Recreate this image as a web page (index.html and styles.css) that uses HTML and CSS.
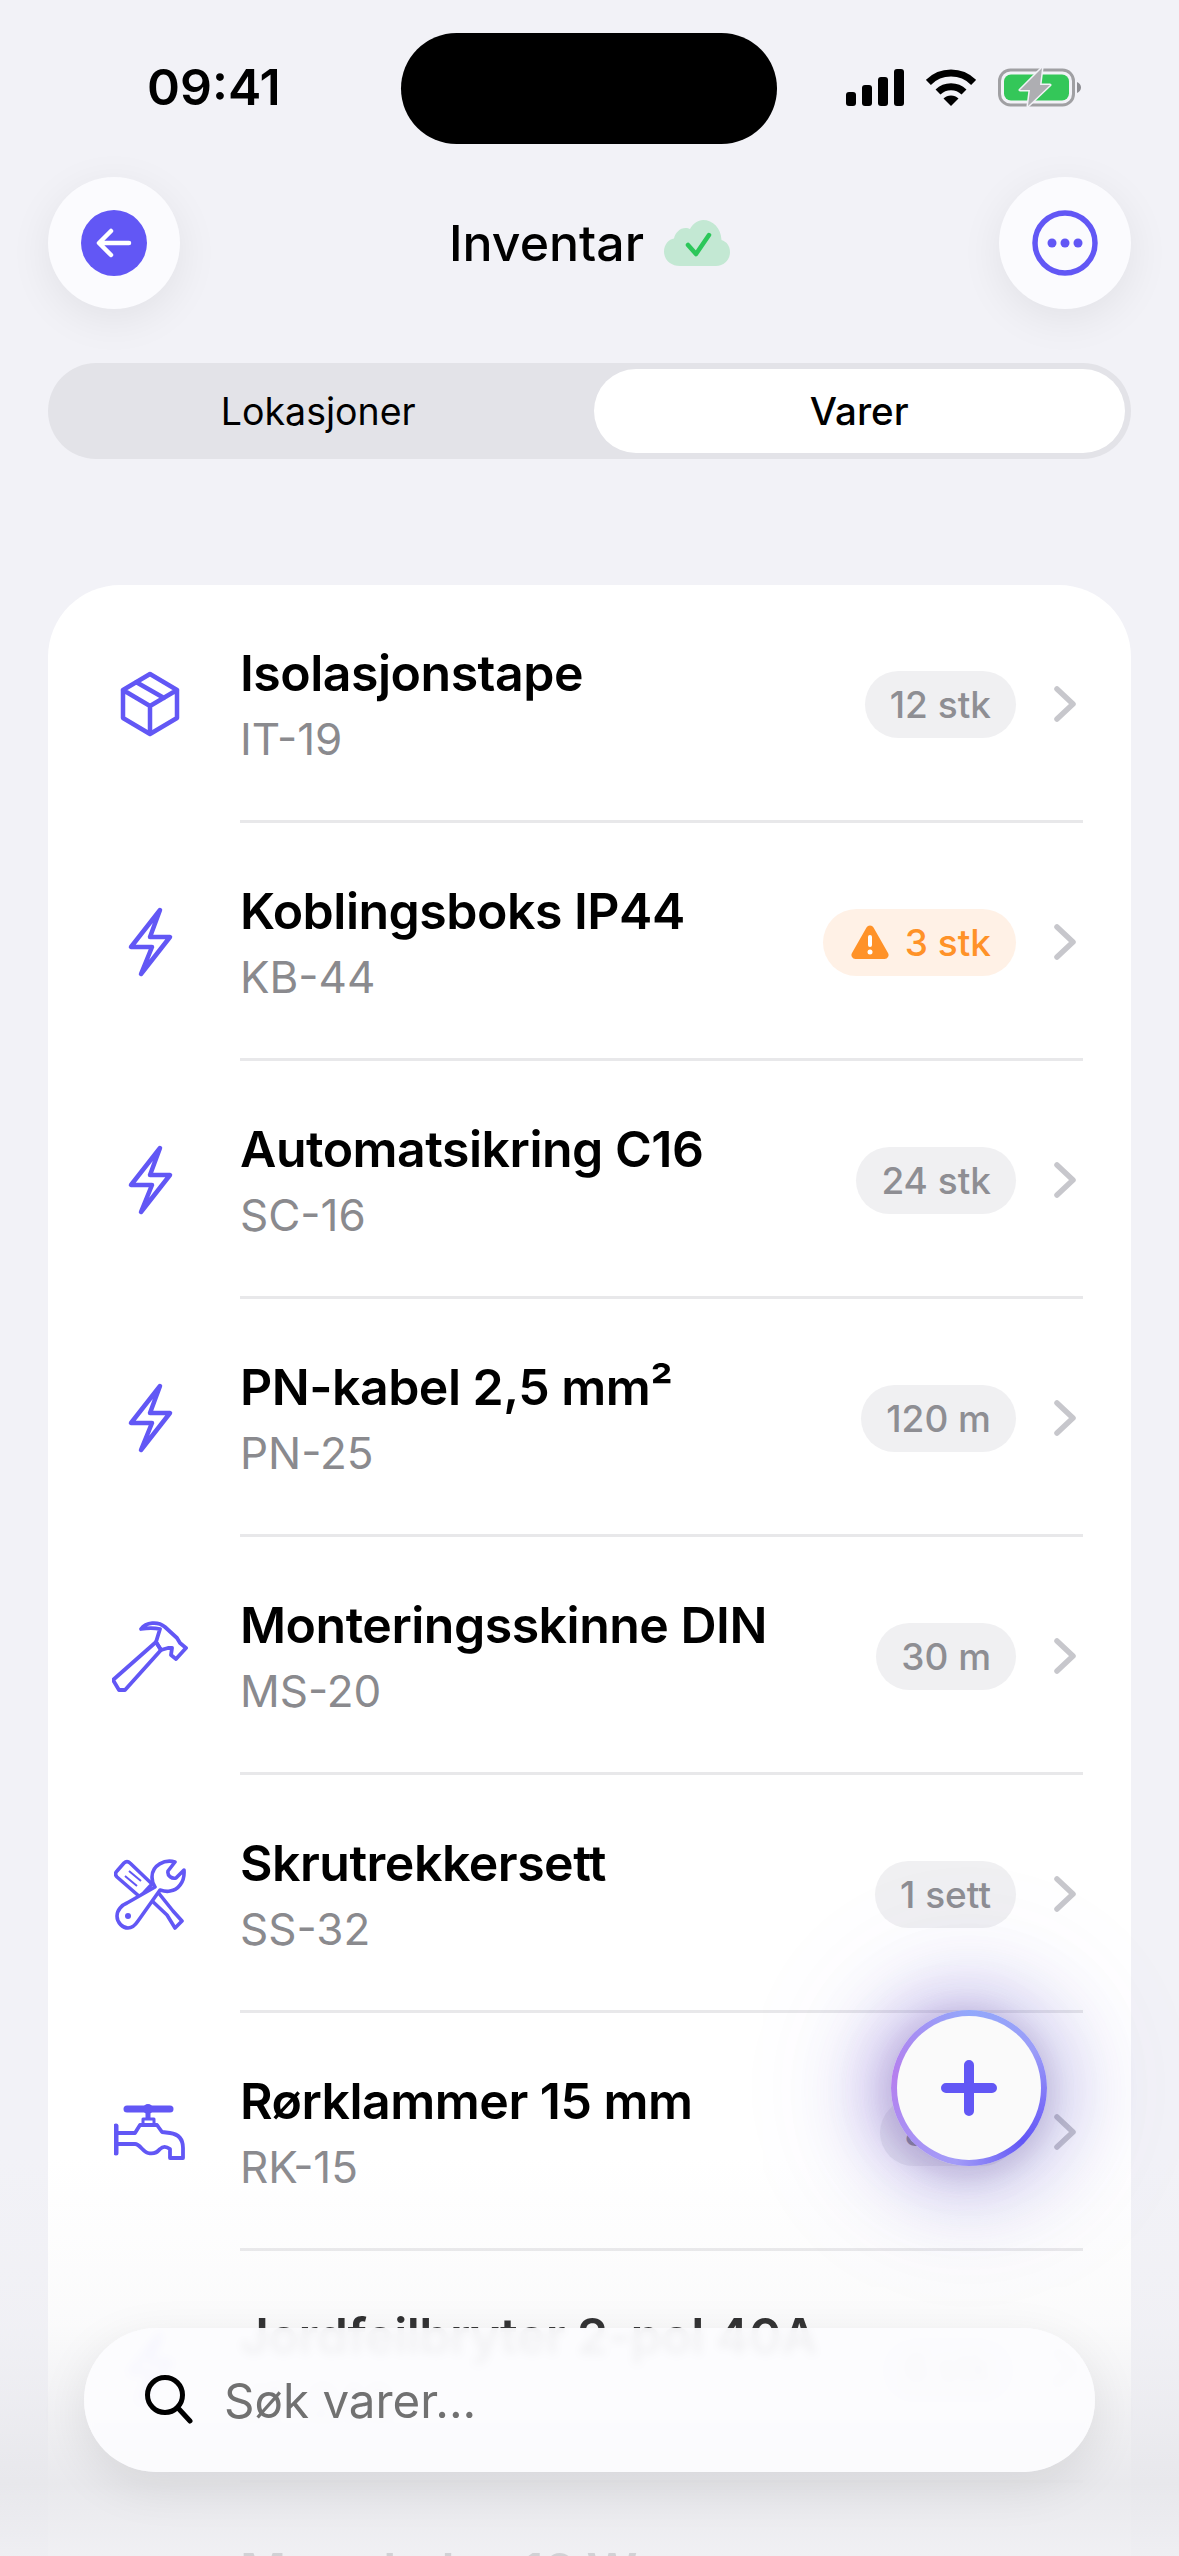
FILE: index.html
```html
<!DOCTYPE html>
<html lang="nb">
<head>
  <meta charset="UTF-8" />
  <title>Inventar</title>
  <link rel="stylesheet" href="styles.css">
</head>
<body>
  <svg class="defs" width="0" height="0">
    <symbol id="bolt" viewBox="-3 -3 47 72">
      <path d="M30 1 1 38h21L11 65l29-37H20z" fill="none" stroke="currentColor" stroke-width="4.5" stroke-linejoin="round"/>
    </symbol>
    <symbol id="chev" viewBox="0 0 22 36">
      <path d="M3 3l16 15L3 33" fill="none" stroke="currentColor" stroke-width="5.5" stroke-linecap="round" stroke-linejoin="round"/>
    </symbol>
  </svg>

  <div class="screen">
    <div class="status">
      <span class="time">09:41</span>
      <div class="island"></div>
      <div class="status-icons">
        <svg width="58" height="37" viewBox="0 0 58 37">
          <rect x="0" y="23" width="10" height="14" rx="3"/>
          <rect x="16" y="16" width="10" height="21" rx="3"/>
          <rect x="32" y="8" width="10" height="29" rx="3"/>
          <rect x="48" y="0" width="10" height="37" rx="3"/>
        </svg>
        <svg width="50" height="37" viewBox="0 0 50 37">
          <path d="M2.4 13.4a32 32 0 0 1 45.2 0M12 23a18.5 18.5 0 0 1 26 0" fill="none" stroke="#000" stroke-width="7"/>
          <path d="M25 37l-7.5-7.5a10.6 10.6 0 0 1 15 0z"/>
        </svg>
        <svg width="83" height="41" viewBox="0 0 83 41">
          <rect x="1.5" y="3" width="74" height="35" rx="11" fill="none" stroke="#a0a0a3" stroke-width="3"/>
          <rect x="6" y="7.5" width="65" height="26" rx="7" fill="#34c759"/>
          <path d="M79 15c2.500 1 4 3 4 5.500s-1.500 4.500-4 5.500z" fill="#8e8e93"/>
          <path d="M44 1 22 23h10l-2 16 22-21H42z" fill="#aeaeb2" stroke="#f2f2f7" stroke-width="3" stroke-linejoin="round" paint-order="stroke"/>
        </svg>
      </div>
    </div>

    <div class="header">
      <div class="round-btn">
        <svg width="66" height="66" viewBox="0 0 66 66">
          <circle cx="33" cy="33" r="33" fill="#6257f5"/>
          <path d="M48 33H19M30 21 18 33l12 12" fill="none" stroke="#fff" stroke-width="4.500" stroke-linecap="round" stroke-linejoin="round"/>
        </svg>
      </div>
      <div class="title-wrap">
        <span class="title">Inventar</span>
        <svg width="66" height="46" viewBox="0 0 66 46">
          <path d="M16 46C7 46 0 40 0 31.500 0 24.500 5 19 10 18.500 11 13 16 8 21.500 8c2 0 3.500.5 4.500 1C29 3.500 34 0 39 0c10 0 18 8 18.500 20C62.500 21.500 66 26 66 32c0 8-6 14-14 14z" fill="#c3e8d3"/>
          <path d="M24 25l8 9 13-19" fill="none" stroke="#2cc75a" stroke-width="4.500" stroke-linecap="round" stroke-linejoin="round"/>
        </svg>
      </div>
      <div class="round-btn">
        <svg width="66" height="66" viewBox="0 0 66 66">
          <circle cx="33" cy="33" r="30" fill="none" stroke="#6257f5" stroke-width="5.500"/>
          <circle cx="20" cy="33" r="4.500" fill="#6257f5"/>
          <circle cx="33" cy="33" r="4.500" fill="#6257f5"/>
          <circle cx="46" cy="33" r="4.500" fill="#6257f5"/>
        </svg>
      </div>
    </div>

    <div class="segment">
      <div class="seg-item">Lokasjoner</div>
      <div class="seg-item active">Varer</div>
    </div>

    <div class="card">
      <div class="row">
        <div class="row-icon">
          <svg width="60" height="66" viewBox="0 0 60 66" fill="none" stroke="currentColor" stroke-width="4.500" stroke-linejoin="round" stroke-linecap="round">
            <path d="M30 3 57 19v28L30 63 3 47V19zM3 19l27 16 27-16M30 35v28M16 11l28 16"/>
          </svg>
        </div>
        <div class="row-body">
          <div class="row-text">
            <div class="name">Isolasjonstape</div>
            <div class="code">IT-19</div>
          </div>
          <span class="pill">12 stk</span>
          <svg class="chev"><use href="#chev"/></svg>
        </div>
      </div>

      <div class="row">
        <div class="row-icon"><svg class="bolt"><use href="#bolt"/></svg></div>
        <div class="row-body">
          <div class="row-text">
            <div class="name">Koblingsboks IP44</div>
            <div class="code">KB-44</div>
          </div>
          <span class="pill warn">
            <svg width="38" height="34" viewBox="0 0 38 34">
              <path d="M15.500 2.500a4 4 0 0 1 7 0l14.500 25.500a4 4 0 0 1-3.500 6H4.500a4 4 0 0 1-3.500-6z" fill="#ff9228"/>
              <rect x="17" y="10" width="4" height="12" rx="2" fill="#fff"/>
              <circle cx="19" cy="27" r="2.500" fill="#fff"/>
            </svg>
            3 stk
          </span>
          <svg class="chev"><use href="#chev"/></svg>
        </div>
      </div>

      <div class="row">
        <div class="row-icon"><svg class="bolt"><use href="#bolt"/></svg></div>
        <div class="row-body">
          <div class="row-text">
            <div class="name">Automatsikring C16</div>
            <div class="code">SC-16</div>
          </div>
          <span class="pill">24 stk</span>
          <svg class="chev"><use href="#chev"/></svg>
        </div>
      </div>

      <div class="row">
        <div class="row-icon"><svg class="bolt"><use href="#bolt"/></svg></div>
        <div class="row-body">
          <div class="row-text">
            <div class="name">PN-kabel 2,5 mm²</div>
            <div class="code">PN-25</div>
          </div>
          <span class="pill">120 m</span>
          <svg class="chev"><use href="#chev"/></svg>
        </div>
      </div>

      <div class="row">
        <div class="row-icon">
          <svg width="76" height="71" viewBox="-1 -1 76 71" fill="none" stroke="currentColor" stroke-width="3.800" stroke-linejoin="round">
            <path d="M0 58 43 20l5 8-36 40H6z"/>
            <path d="M28 7c5-7 17-8 24-2l12 11 3 5 6 5-10 11-5-4 1-7h-4l-7 2-5-8 4-13c-5-1-13-1-19 0z"/>
          </svg>
        </div>
        <div class="row-body">
          <div class="row-text">
            <div class="name">Monteringsskinne DIN</div>
            <div class="code">MS-20</div>
          </div>
          <span class="pill">30 m</span>
          <svg class="chev"><use href="#chev"/></svg>
        </div>
      </div>

      <div class="row">
        <div class="row-icon">
          <svg width="72" height="71" viewBox="-1 -1 72 71" fill="none" stroke="currentColor" stroke-width="3.600" stroke-linejoin="round">
            <path d="M2 11 9 3c2-2 4-2 6 0l22 21-12 13L2 17c-2-2-2-4 0-6z"/>
            <path d="M10 16l12 10M14 11l12 10" stroke-width="2"/>
            <path d="M35 39l17 16 8 13 7-7-9-10-16-20"/>
            <path d="M60 2C50-1 37 5 37 17c0 4 1 7 3 10L12 43C7 45 2 50 2 56c0 7 6 12 11 12 5 0 8-4 10-7l22-31c3 1 7 2 10 1 8-1 15-9 14-21l-8 8c-4 1-9-2-8-7z" fill="#fff"/>
            <circle cx="13" cy="56" r="3" fill="currentColor" stroke="none"/>
          </svg>
        </div>
        <div class="row-body">
          <div class="row-text">
            <div class="name">Skrutrekkersett</div>
            <div class="code">SS-32</div>
          </div>
          <span class="pill">1 sett</span>
          <svg class="chev"><use href="#chev"/></svg>
        </div>
      </div>

      <div class="row">
        <div class="row-icon">
          <svg width="72" height="58" viewBox="0 -1 72 58" fill="none" stroke="currentColor" stroke-linejoin="round">
            <path d="M13 5h43" stroke-width="7" stroke-linecap="round"/>
            <circle cx="34" cy="5" r="5" fill="currentColor" stroke="none"/>
            <path d="M34 7v8" stroke-width="5"/>
            <path d="M29 15h11v6H29z" stroke-width="3"/>
            <path d="M2 22v27" stroke-width="5" stroke-linecap="round"/>
            <path d="M2 29h19l5-8h17l5 7 8 1c7 1 13 5 13 15v10H56v-9c-4-3-7-3-10 0-4 5-8 5-12 4-5-1-8-9-13-9H2" stroke-width="3.800"/>
          </svg>
        </div>
        <div class="row-body">
          <div class="row-text">
            <div class="name">Rørklammer 15 mm</div>
            <div class="code">RK-15</div>
          </div>
          <span class="pill">8 stk</span>
          <svg class="chev"><use href="#chev"/></svg>
        </div>
      </div>

      <div class="row short">
        <div class="row-icon"><svg class="bolt"><use href="#bolt"/></svg></div>
        <div class="row-body">
          <div class="row-text">
            <div class="name">Jordfeilbryter 2-pol 40A</div>
            <div class="code">JF-240</div>
          </div>
          <span class="pill">6 stk</span>
          <svg class="chev"><use href="#chev"/></svg>
        </div>
      </div>

      <div class="row">
        <div class="row-icon"><svg class="bolt"><use href="#bolt"/></svg></div>
        <div class="row-body">
          <div class="row-text">
            <div class="name">Murerhylse 16 W</div>
            <div class="code">MH-16</div>
          </div>
          <span class="pill">4 stk</span>
          <svg class="chev"><use href="#chev"/></svg>
        </div>
      </div>
    </div>

    <div class="fade"></div>

    <button class="fab">
      <span class="fab-inner">
        <svg width="56" height="56" viewBox="0 0 56 56">
          <path d="M28 5v46M5 28h46" fill="none" stroke="#6257f5" stroke-width="10" stroke-linecap="round"/>
        </svg>
      </span>
    </button>

    <div class="search">
      <svg width="50" height="50" viewBox="0 0 50 50" fill="none" stroke="#000" stroke-width="5" stroke-linecap="round">
        <circle cx="22" cy="20" r="17.500"/>
        <path d="M35 33l12 13"/>
      </svg>
      <span class="search-text">Søk varer...</span>
    </div>
  </div>
</body>
</html>
```

FILE: styles.css
```css
body { margin: 0; background: #f2f2f7; font-family: Inter, "Noto Sans", sans-serif; color: #000; }
.defs { position: absolute; }
.screen { position: relative; width: 1179px; height: 2556px; overflow: hidden; background: #f2f2f7; }

/* status bar */
.status { height: 144px; padding-top: 33px; box-sizing: border-box; display: flex; justify-content: space-between; }
.time { width: 401px; height: 111px; padding-left: 147px; box-sizing: border-box; font-size: 50px; font-weight: 600; line-height: 108px; }
.island { width: 376px; height: 111px; border-radius: 56px; background: #000; }
.status-icons { width: 402px; height: 108px; padding-left: 69px; box-sizing: border-box; display: flex; align-items: center; gap: 22px; }

/* header */
.header { margin-top: 33px; height: 132px; padding: 0 48px; display: flex; justify-content: space-between; align-items: center; }
.round-btn { width: 132px; height: 132px; border-radius: 50%; background: #fbfbfe; display: flex; align-items: center; justify-content: center; box-shadow: 0 10px 44px rgba(0, 0, 0, .07); }
.title-wrap { display: flex; align-items: center; gap: 20px; }
.title { font-size: 50px; font-weight: 500; }

/* segment */
.segment { margin: 54px 48px 0; height: 96px; box-sizing: border-box; padding: 6px; border-radius: 48px; background: #e3e3e8; display: grid; grid-template-columns: 1fr 1fr; gap: 8px; }
.seg-item { padding-right: 3px; border-radius: 42px; display: flex; align-items: center; justify-content: center; font-size: 37.5px; font-weight: 400; }
.seg-item.active { padding-right: 0; background: #fff; font-size: 38.5px; font-weight: 500; }

/* list */
.card { margin: 126px 48px 0; border-radius: 72px 72px 0 0; background: #fff; }
.row { height: 238px; display: flex; }
.row.short { height: 232px; }
.row-icon { width: 192px; padding-left: 12px; box-sizing: border-box; flex: none; display: flex; align-items: center; justify-content: center; color: #6257f5; }
.bolt { width: 47px; height: 72px; }
.row-body { flex: 1; margin-right: 48px; padding-top: 3px; border-bottom: 3px solid #e8e8ea; display: flex; align-items: center; }
.row-text { flex: 1; }
.name { font-size: 50px; font-weight: 600; line-height: 60px; letter-spacing: -.5px; }
.code { margin-top: 10px; font-size: 44px; line-height: 52px; color: #8a8a8e; }
.pill { height: 67px; padding: 0 25px; border-radius: 34px; background: #f0f0f2; color: #8e8e93; font-size: 37px; font-weight: 500; display: flex; align-items: center; gap: 16px; }
.pill.warn { padding: 0 25px 0 28px; background: #fff1e6; color: #ff9228; }
.chev { width: 22px; height: 36px; margin: 0 7px 0 38px; color: #c7c7cc; flex: none; }

/* bottom overlays */
.fade { position: absolute; left: 0; right: 0; bottom: 0; height: 400px; background: linear-gradient(to bottom, rgba(235, 235, 238, 0) 0, rgba(235, 235, 238, .22) 42%, rgba(233, 233, 237, .6) 62%, rgba(231, 231, 235, .93) 82%, rgba(238, 238, 242, .88) 100%); }
.fab { position: absolute; left: 891px; top: 2010px; width: 156px; height: 156px; padding: 6px; border: 0; border-radius: 50%; background: conic-gradient(from 0deg, #92a8fb, #9b9df8 60deg, #7d72f7 100deg, #6257f5 135deg, #a39cf8 190deg, #ab8ef3 240deg, #b57fee 280deg, #a195f5 325deg, #92a8fb); box-shadow: 0 4px 70px 30px rgba(98, 87, 200, .26), 0 0 130px 60px rgba(98, 87, 205, .06), -18px 0 50px rgba(190, 120, 235, .2), 0 6px 26px 6px rgba(0, 0, 0, .1); }
.fab-inner { width: 100%; height: 100%; border-radius: 50%; background: #fafafa; display: flex; align-items: center; justify-content: center; }
.search { position: absolute; left: 84px; top: 2328px; width: 1011px; height: 144px; box-sizing: border-box; padding: 0 0 0 59px; border-radius: 72px; background: rgba(252, 252, 254, .94); backdrop-filter: blur(4px); box-shadow: 0 14px 50px rgba(0, 0, 0, .09); display: flex; align-items: center; gap: 31px; }
.search-text { font-size: 47.5px; color: #717171; }
```
